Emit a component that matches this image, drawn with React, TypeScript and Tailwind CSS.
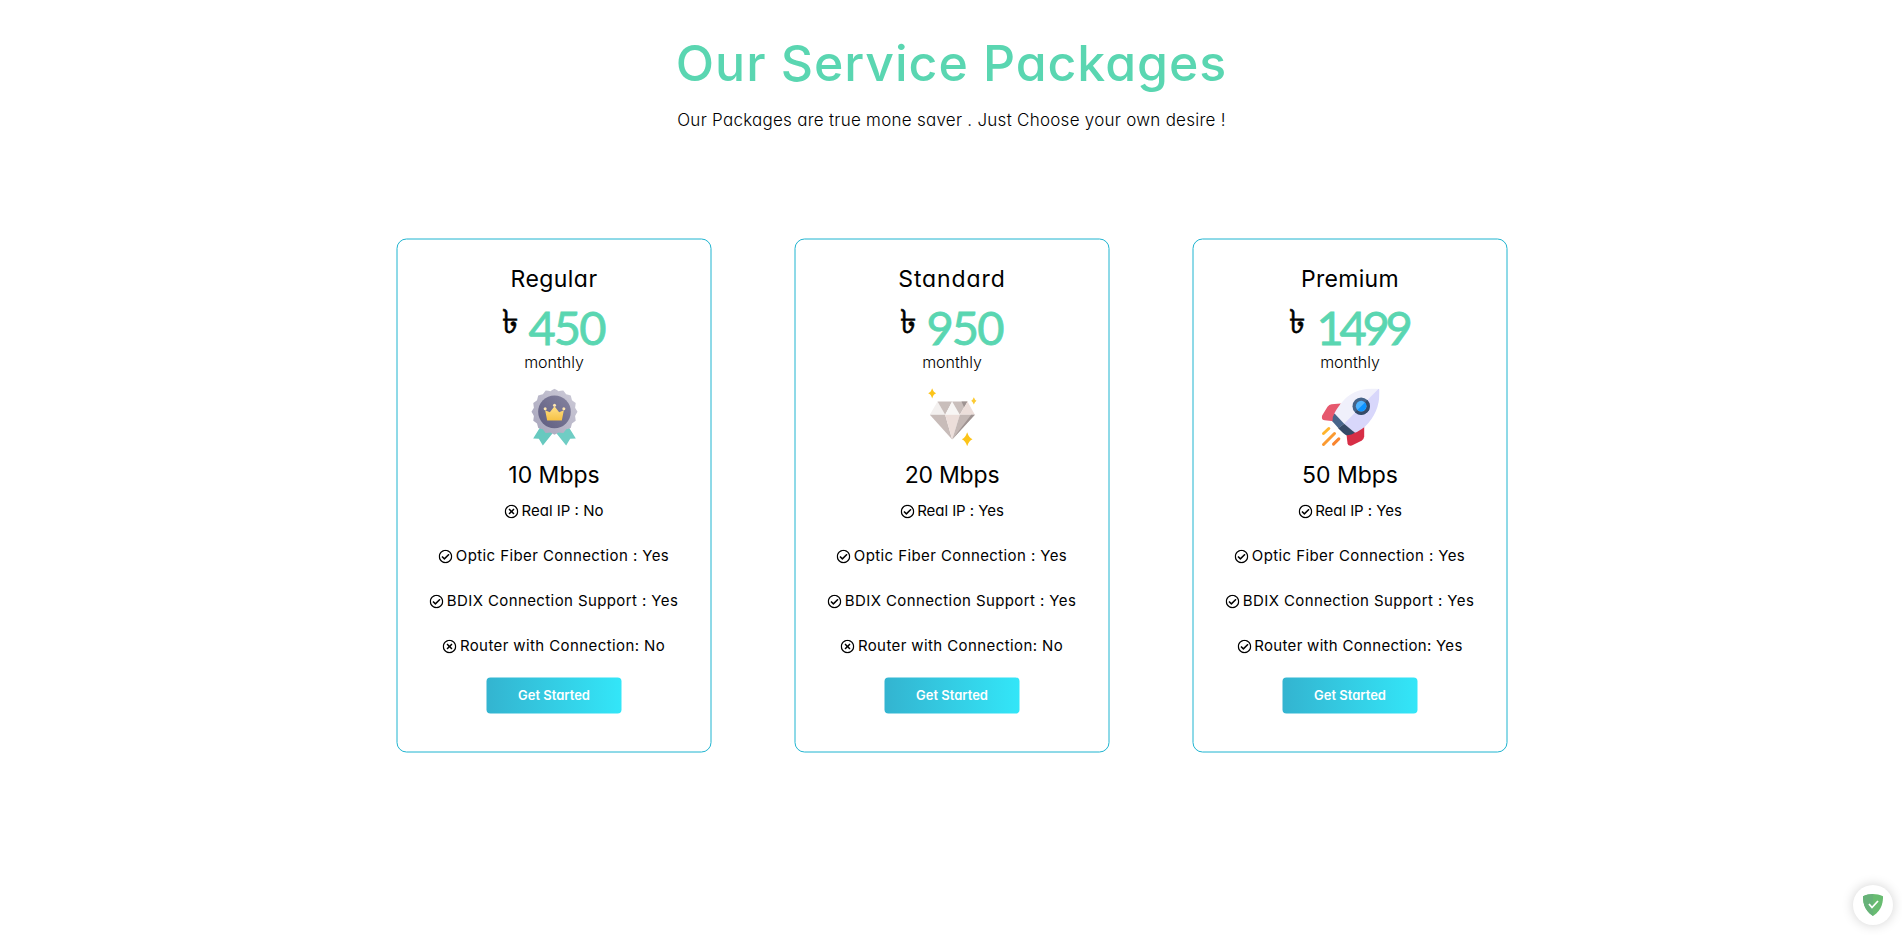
import type { ReactNode } from "react";
import { FaRegCheckCircle, FaRegTimesCircle } from "react-icons/fa";

type Feature = { text: string; ok: boolean; tracking: string };
type Plan = {
  name: string;
  nameTracking: string;
  price: string;
  priceTracking: string;
  speed: string;
  speedTracking: string;
  icon: ReactNode;
  features: Feature[];
};

const scallops = 16;
const medalEdge = Array.from({ length: scallops }, (_, i) => {
  const at = (k: number, r: number) => {
    const a = ((k * 2 * Math.PI) / scallops) - Math.PI / 2;
    return `${(132 + r * Math.cos(a)).toFixed(1)} ${(97 + r * Math.sin(a)).toFixed(1)}`;
  };
  return `${i === 0 ? `M${at(-0.5, 63)}` : ""}Q${at(i - 0.3, 65)} ${at(i, 69)}Q${at(i + 0.3, 65)} ${at(i + 0.5, 63)}`;
}).join("") + "Z";

function Medal() {
  return (
    <svg viewBox="45 27 174 174" className="size-[58px]">
      <defs>
        <linearGradient id="medal-rim" x1="1" y1="0" x2="0" y2="1">
          <stop offset="0" stopColor="#cfcdd9" />
          <stop offset="1" stopColor="#a5a3ba" />
        </linearGradient>
        <linearGradient id="medal-face" x1="1" y1="0" x2="0" y2="1">
          <stop offset="0" stopColor="#85839f" />
          <stop offset="1" stopColor="#5f5d80" />
        </linearGradient>
        <linearGradient id="medal-crown" x1="0" y1="0" x2="0" y2="1">
          <stop offset="0" stopColor="#ffe08a" />
          <stop offset="1" stopColor="#f6c244" />
        </linearGradient>
      </defs>
      <path d="M88 145 68 177 85 178 97 198 130 157Z" fill="#67c9bf" />
      <path d="M176 145 196 177 179 178 167 198 134 157Z" fill="#6fcdc4" />
      <path d={medalEdge} fill="url(#medal-rim)" />
      <circle cx="132" cy="97" r="49" fill="url(#medal-face)" />
      <path d="M104 92 118 98 132 80 146 98 160 92 154 123H110Z" fill="url(#medal-crown)" />
      <circle cx="104" cy="88" r="4.5" fill="#ffe7b0" />
      <circle cx="132" cy="77" r="4.5" fill="#ffe7b0" />
      <circle cx="160" cy="88" r="4.5" fill="#ffe7b0" />
    </svg>
  );
}

function Diamond() {
  return (
    <svg viewBox="54 27 174 174" className="size-[58px]">
      <path d="M96 66 73 106H119Z" fill="#f3f0ef" />
      <path d="M96 66H140L119 106Z" fill="#c9bebb" />
      <path d="M140 66 119 106H163Z" fill="#f8f6f5" />
      <path d="M140 66H186L163 106Z" fill="#c9bebb" />
      <path d="M168 66H186L176 84Z" fill="#9e9392" />
      <path d="M186 66 208 106H163Z" fill="#ecdeda" />
      <path d="M73 106H119L140 180Z" fill="#c8bcb9" />
      <path d="M119 106H163L140 180Z" fill="#ecdeda" />
      <path d="M163 106H208L140 180Z" fill="#c4b8b5" />
      <path d="M197 106H208L140 180Z" fill="#9e9392" />
      <path d="M80 25Q83 38 92 41 83 44 80 57 77 44 68 41 77 38 80 25Z" fill="#fcc419" />
      <path d="M205 53Q208 61 213 64 208 67 205 75 202 67 197 64 202 61 205 53Z" fill="#fccb33" />
      <path d="M185 158Q190 174 201 179 190 184 185 200 180 184 169 179 180 174 185 158Z" fill="#fcc419" />
    </svg>
  );
}

function Rocket() {
  return (
    <svg viewBox="48 27 174 174" className="size-[58px]">
      <path d="M106 72 78 74Q71 75 66 82L50 108Q46 121 58 122L84 125Z" fill="#e6586e" />
      <path d="M176 142V172Q175 180 168 184L139 198Q128 202 126 191L123 165Z" fill="#d72e46" />
      <path d="M219 28Q146 22 108 70 92 90 86 103L118 135Z" fill="#f0f0fb" />
      <path d="M219 28Q223 29 222 33 224 98 178 142 160 156 148 160L116 133Z" fill="#d8d7fb" />
      <path d="M87 102Q80 111 81 126L99 146 116 133Z" fill="#47658a" />
      <path d="M116 133 148 160Q138 168 122 167 114 162 98 146Z" fill="#354a67" />
      <circle cx="167" cy="80" r="26" fill="#456388" />
      <path d="M185.500 61.500A26 26 0 0 1 148.500 98.500Z" fill="#354a67" />
      <circle cx="167" cy="80" r="16" fill="#4fb3ff" />
      <path d="M178.300 68.700A16 16 0 0 1 155.700 91.300Z" fill="#0d93ff" />
      <g strokeWidth="9" strokeLinecap="round">
        <path d="M54 162 70 147" stroke="#ffb52e" />
        <path d="M54 195 87 162" stroke="#fb9a31" />
        <path d="M84 194 100 178" stroke="#f9852f" />
      </g>
    </svg>
  );
}

const optic: Feature = { text: "Optic Fiber Connection : Yes", ok: true, tracking: "tracking-[0.4px]" };
const bdix: Feature = { text: "BDIX Connection Support : Yes", ok: true, tracking: "tracking-[0.4px]" };
const noRouter: Feature = { text: "Router with Connection: No", ok: false, tracking: "tracking-[0.4px]" };
const realIp: Feature = { text: "Real IP : Yes", ok: true, tracking: "tracking-[-0.05px]" };

const plans: Plan[] = [
  {
    name: "Regular",
    nameTracking: "tracking-[0.45px]",
    price: "450",
    priceTracking: "tracking-[-2px]",
    speed: "10 Mbps",
    speedTracking: "tracking-normal",
    icon: <Medal />,
    features: [{ text: "Real IP : No", ok: false, tracking: "tracking-normal" }, optic, bdix, noRouter],
  },
  {
    name: "Standard",
    nameTracking: "tracking-[0.9px]",
    price: "950",
    priceTracking: "tracking-[-2px]",
    speed: "20 Mbps",
    speedTracking: "tracking-[-0.2px]",
    icon: <Diamond />,
    features: [realIp, optic, bdix, noRouter],
  },
  {
    name: "Premium",
    nameTracking: "tracking-[0.3px]",
    price: "1499",
    priceTracking: "tracking-[-4.2px]",
    speed: "50 Mbps",
    speedTracking: "tracking-normal",
    icon: <Rocket />,
    features: [realIp, optic, bdix, { text: "Router with Connection: Yes", ok: true, tracking: "tracking-[0.3px]" }],
  },
];

function PlanCard({ plan }: { plan: Plan }) {
  return (
    <article className="flex h-[514px] w-[315px] translate-x-[0.5px] translate-y-[0.5px] flex-col items-center rounded-[10px] border border-[#1fb4d0] pt-[23px]">
      <h2 className={`h-8 text-[23px] leading-8 ${plan.nameTracking}`}>{plan.name}</h2>
      <div className="mt-2 flex h-12 items-start gap-[11px] pr-0.5">
        <span className="mt-0.5 font-['Noto_Sans',sans-serif] text-[33px] leading-8 font-medium [-webkit-text-stroke:0.6px_black]">৳</span>
        <span
          className={`font-[Lato,sans-serif] text-[47px] leading-[48px] text-[#5ad6b1] [-webkit-text-stroke:0.8px_#5ad6b1] ${plan.priceTracking}`}
        >
          {plan.price}
        </span>
      </div>
      <p className="h-[22px] text-base leading-[22px] font-light">monthly</p>
      <div className="mt-4">{plan.icon}</div>
      <h3 className={`mt-[15px] h-[27px] text-[23px] leading-[27px] ${plan.speedTracking}`}>{plan.speed}</h3>
      <ul className="flex flex-col items-center">
        {plan.features.map((f) => (
          <li key={f.text} className="flex h-[45px] items-center gap-[3px] text-[15px]">
            {f.ok ? <FaRegCheckCircle className="size-3.5" /> : <FaRegTimesCircle className="size-3.5" />}
            <span className={f.tracking}>{f.text}</span>
          </li>
        ))}
      </ul>
      <button className="mt-[9px] h-9 w-[135px] rounded bg-linear-to-r from-[#33b4d0] to-[#33e6f8] text-[13px] font-semibold text-white">
        Get Started
      </button>
    </article>
  );
}

export default function App() {
  return (
    <main className="flex h-[935px] flex-col items-center bg-white pt-[33px] pl-px font-[Inter,sans-serif] text-black [font-feature-settings:'cv11']">
      <h1 className="h-[60px] text-[50px] leading-[60px] font-medium tracking-[0.95px] text-[#5ad6b1]">Our Service Packages</h1>
      <p className="mt-[15px] h-6 text-[17px] leading-6 font-light tracking-[0.26px]">
        Our Packages are true mone saver . Just Choose your own desire !
      </p>
      <section className="mt-[106px] flex gap-[83px]">
        {plans.map((p) => (
          <PlanCard key={p.name} plan={p} />
        ))}
      </section>
      <div className="fixed right-[9px] bottom-[10px] flex size-10 items-center justify-center rounded-full bg-white shadow-[0_0_12px_rgba(0,0,0,0.18)]">
        <svg viewBox="0 0 20 22" className="h-[22px] w-5">
          <path d="M10 0C7 0 3 .7 0 2.200 0 6 0 15.500 10 22 20 15.500 20 6 20 2.200 17 .7 13 0 10 0Z" fill="#68bc71" />
          <path d="M10 0C7 0 3 .7 0 2.200 0 6 0 15.500 10 22Z" fill="#67b279" />
          <path d="M6 10 9 13.500 15 7" fill="none" stroke="white" strokeWidth="1.800" />
        </svg>
      </div>
    </main>
  );
}
